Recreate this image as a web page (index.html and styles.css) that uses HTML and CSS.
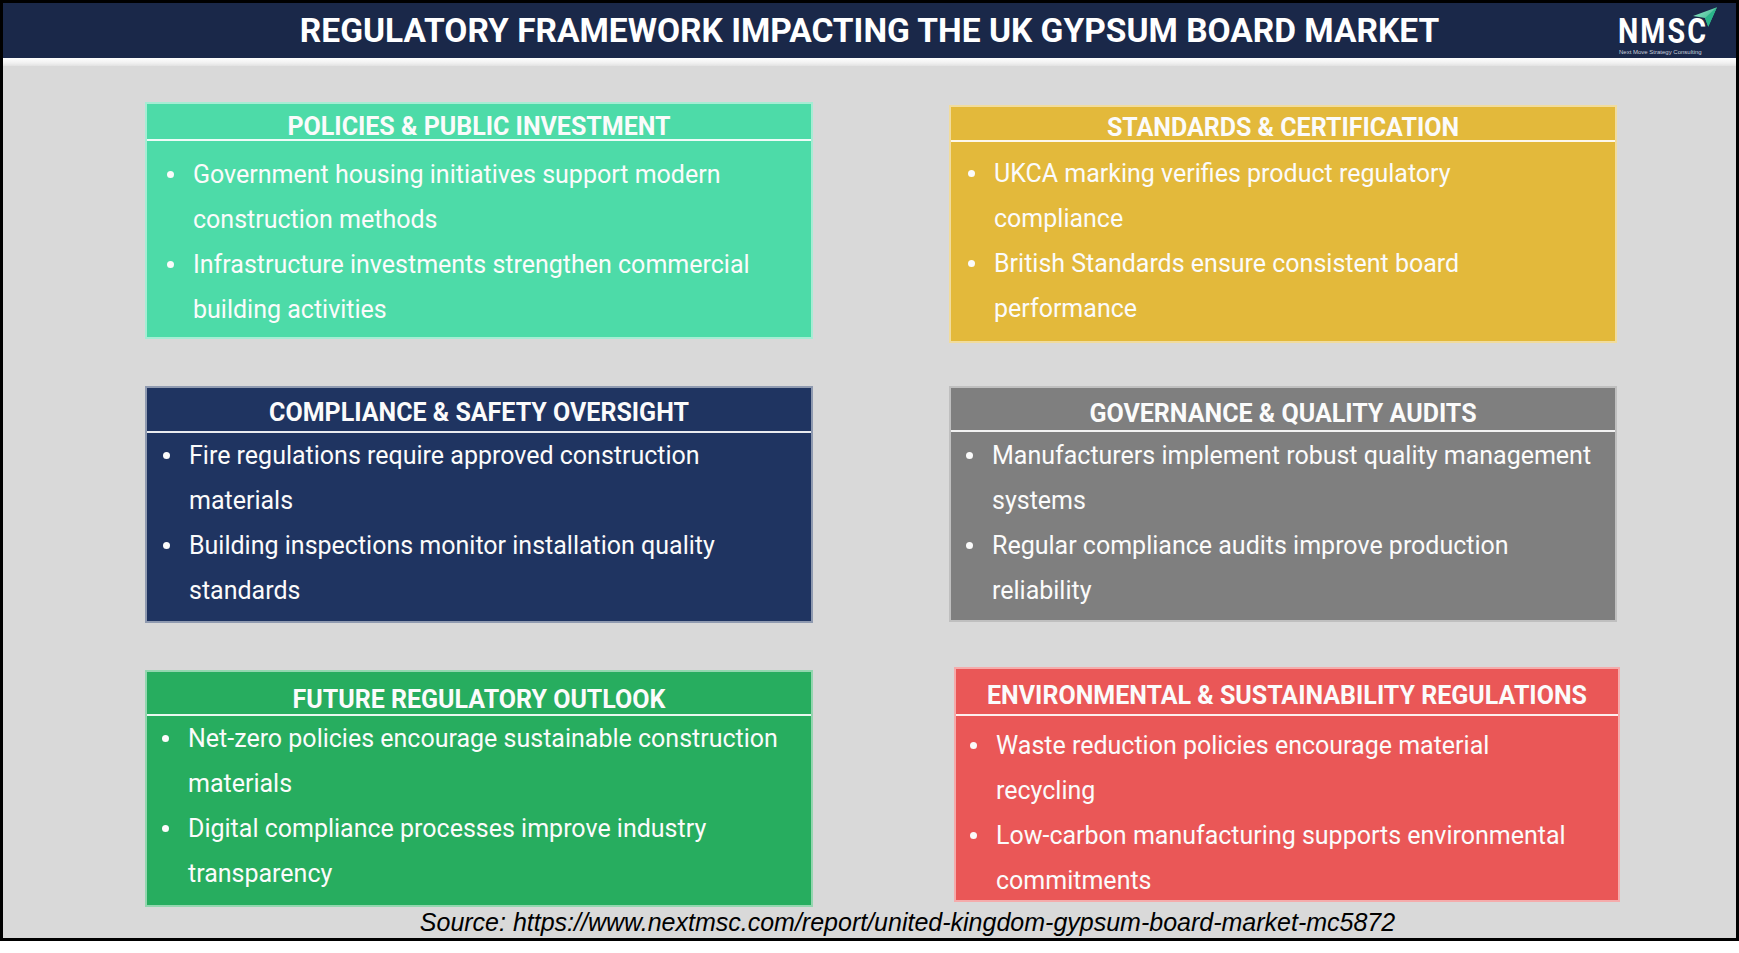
FILE: index.html
```html
<!DOCTYPE html>
<html lang="en">
<head>
<meta charset="utf-8">
<title>Regulatory Framework Impacting the UK Gypsum Board Market</title>
<link rel="stylesheet" href="styles.css">
</head>
<body>
<div class="frame">
  <header class="topbar">
    <div class="spacer"></div>
    <h1 class="title">REGULATORY FRAMEWORK IMPACTING THE UK GYPSUM BOARD MARKET</h1>
    <div class="logo">
      <div class="logo-mark">NMSC</div>
      <svg class="logo-plane" viewBox="0 0 24 20" width="26" height="22" aria-hidden="true">
        <defs>
          <linearGradient id="pl" x1="0" y1="0" x2="1" y2="1">
            <stop offset="0" stop-color="#9af2cc"/>
            <stop offset="1" stop-color="#1f9c7a"/>
          </linearGradient>
        </defs>
        <polygon points="1,9 23,1 15,19 12,11" fill="url(#pl)"/>
        <polygon points="12,11 23,1 15,19" fill="#2bb58a"/>
      </svg>
      <div class="logo-sub">Next Move Strategy Consulting</div>
    </div>
  </header>
  <div class="stripe"></div>
  <main class="content">
    <div class="grid">
      <section class="card c-policies">
        <h2 class="card-head">POLICIES &amp; PUBLIC INVESTMENT</h2>
        <ul class="card-list">
          <li>Government housing initiatives support modern construction methods</li>
          <li>Infrastructure investments strengthen commercial building activities</li>
        </ul>
      </section>
      <section class="card c-standards">
        <h2 class="card-head">STANDARDS &amp; CERTIFICATION</h2>
        <ul class="card-list">
          <li>UKCA marking verifies product regulatory compliance</li>
          <li>British Standards ensure consistent board performance</li>
        </ul>
      </section>
      <section class="card c-compliance">
        <h2 class="card-head">COMPLIANCE &amp; SAFETY OVERSIGHT</h2>
        <ul class="card-list">
          <li>Fire regulations require approved construction materials</li>
          <li>Building inspections monitor installation quality standards</li>
        </ul>
      </section>
      <section class="card c-governance">
        <h2 class="card-head">GOVERNANCE &amp; QUALITY AUDITS</h2>
        <ul class="card-list">
          <li>Manufacturers implement robust quality management systems</li>
          <li>Regular compliance audits improve production reliability</li>
        </ul>
      </section>
      <section class="card c-future">
        <h2 class="card-head">FUTURE REGULATORY OUTLOOK</h2>
        <ul class="card-list">
          <li>Net-zero policies encourage sustainable construction materials</li>
          <li>Digital compliance processes improve industry transparency</li>
        </ul>
      </section>
      <section class="card c-env">
        <h2 class="card-head">ENVIRONMENTAL &amp; SUSTAINABILITY REGULATIONS</h2>
        <ul class="card-list">
          <li>Waste reduction policies encourage material recycling</li>
          <li>Low-carbon manufacturing supports environmental commitments</li>
        </ul>
      </section>
    </div>
    <p class="source">Source: https://www.nextmsc.com/report/united-kingdom-gypsum-board-market-mc5872</p>
  </main>
</div>
</body>
</html>
```

FILE: styles.css
```css
* { box-sizing: border-box; }
html, body { margin: 0; padding: 0; background: #ffffff; }
body { width: 1739px; height: 953px; overflow: hidden; font-family: Roboto, "Liberation Sans", sans-serif; }

.frame {
  width: 1739px;
  height: 941px;
  border: 3px solid #000;
  background: #d9d9d9;
  display: flex;
  flex-direction: column;
}

.topbar {
  height: 55px;
  background: #1a2849;
  display: grid;
  grid-template-columns: 1fr auto 1fr;
  align-items: stretch;
}
.title {
  margin: 0;
  color: #ffffff;
  font-family: Roboto, sans-serif;
  font-weight: 700;
  font-size: 33.5px;
  line-height: 55px;
  white-space: nowrap;
}
.logo {
  justify-self: end;
  margin-right: 20px;
  width: 98px;
  position: relative;
  padding-top: 12px;
}
.logo-mark {
  font-family: Roboto, sans-serif;
  font-weight: 700;
  font-size: 35px;
  line-height: 33px;
  letter-spacing: 2.5px;
  color: #ffffff;
  transform: scaleX(0.82);
  transform-origin: left center;
}
.logo-plane {
  position: absolute;
  right: -2px;
  top: 3px;
}
.logo-sub {
  font-family: "Liberation Sans", sans-serif;
  font-size: 6px;
  line-height: 7px;
  color: #c9cfdb;
  white-space: nowrap;
  margin-top: 1px;
  margin-left: 1px;
}

.stripe {
  height: 8px;
  background: linear-gradient(#ffffff, #f1f1f1 60%, #e2e2e2);
}

.content {
  flex: 1;
  padding: 36px 0 0 142px;
}
.grid {
  display: grid;
  grid-template-columns: 668px 668px;
  grid-template-rows: 284px 284px auto;
  column-gap: 136px;
  align-items: start;
}

.card {
  border: 2px solid rgba(255,255,255,0.5);
  color: #fbfbfb;
  display: flex;
  flex-direction: column;
}
.card-head {
  flex-shrink: 0;
  margin: 0;
  display: flex;
  align-items: flex-end;
  justify-content: center;
  font-weight: 700;
  font-size: 25px;
  line-height: 24px;
  border-bottom: 2px solid rgba(255,255,255,0.9);
  white-space: nowrap;
}
.card-list {
  flex-shrink: 0;
  list-style: none;
  margin: 0;
  font-size: 25px;
  line-height: 45px;
}
.card-list li {
  padding-left: 23px;
}
.card-list li::before {
  content: "";
  display: inline-block;
  width: 7px;
  height: 7px;
  border-radius: 50%;
  background: currentColor;
  margin-left: -26px;
  margin-right: 19px;
  vertical-align: 5px;
}

.c-policies { background: #4ddba8; height: 237px; }
.c-policies .card-head { height: 37px; }
.c-policies .card-list { padding: 11px 20px 0 23px; }

.c-standards { background: #e3b93b; height: 238px; margin-top: 3px; }
.c-standards .card-head { height: 35px; }
.c-standards .card-list { padding: 9px 32px 0 20px; }

.c-compliance { background: #1f3461; height: 237px; }
.c-compliance .card-head { height: 45px; padding-bottom: 6px; }
.c-compliance .card-list { padding: 0 20px 0 19px; }

.c-governance { background: #7f7f7f; height: 236px; }
.c-governance .card-head { height: 44px; padding-bottom: 4px; }
.c-governance .card-list { padding: 1px 18px 0 18px; }

.c-future { background: #27ad5f; height: 237px; }
.c-future .card-head { height: 44px; padding-bottom: 2px; }
.c-future .card-list { padding: 0 20px 0 18px; }

.c-env { background: #ea5757; height: 235px; width: 666px; margin-top: -3px; margin-left: 5px; }
.c-env .card-head { height: 47px; padding-bottom: 6px; }
.c-env .card-list { padding: 7px 30px 0 17px; }

.source {
  margin: 1px 0 0 -142px;
  padding-left: 76px;
  width: 1733px;
  text-align: center;
  font-family: "Liberation Sans", Arial, sans-serif;
  font-style: italic;
  font-size: 25px;
  line-height: 28px;
  color: #000000;
  white-space: nowrap;
}
```
